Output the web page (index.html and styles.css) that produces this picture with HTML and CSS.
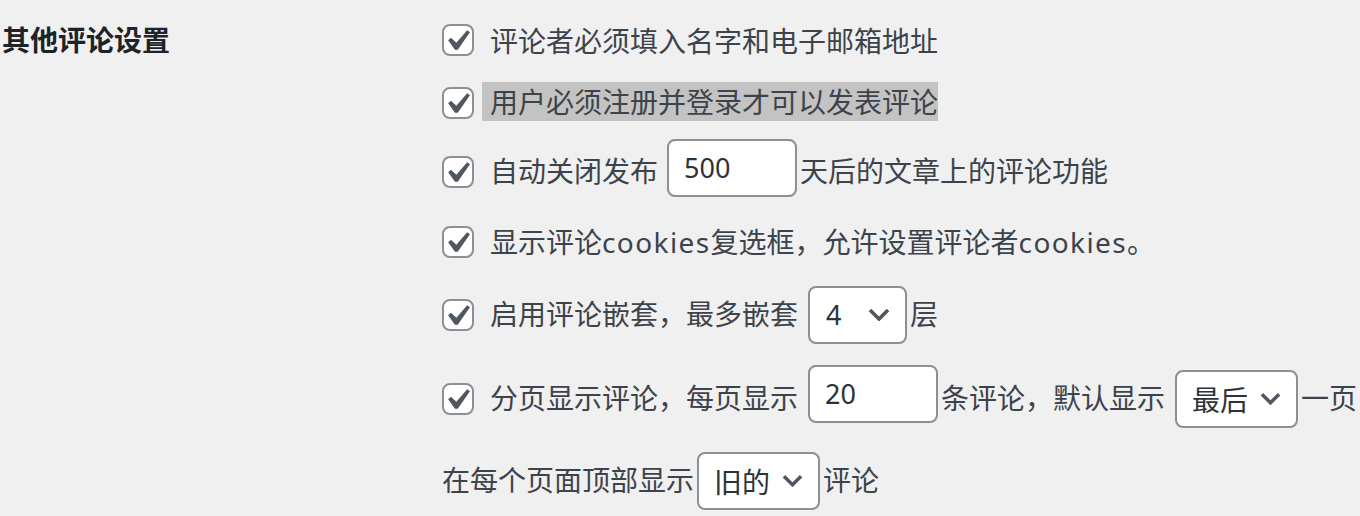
FILE: index.html
```html
<!DOCTYPE html>
<html lang="zh-CN">
<head>
<meta charset="utf-8">
<title>其他评论设置</title>
<link rel="stylesheet" href="styles.css">
</head>
<body>
<div class="form-row">
  <div class="th">其他评论设置</div>
  <div class="td">
    <div class="row r1">
      <span class="check"><svg viewBox="0 0 20 20" width="42" height="42"><path d="M14.83 4.89l1.34.94-5.81 8.38H9.02L5.78 9.67l1.34-1.25 2.57 2.4z"/></svg></span>
      <span class="label">评论者必须填入名字和电子邮箱地址</span>
    </div>
    <div class="row r2">
      <span class="check"><svg viewBox="0 0 20 20" width="42" height="42"><path d="M14.83 4.89l1.34.94-5.81 8.38H9.02L5.78 9.67l1.34-1.25 2.57 2.4z"/></svg></span>
      <span class="label hl">用户必须注册并登录才可以发表评论</span>
    </div>
    <div class="row r3 tall">
      <span class="check"><svg viewBox="0 0 20 20" width="42" height="42"><path d="M14.83 4.89l1.34.94-5.81 8.38H9.02L5.78 9.67l1.34-1.25 2.57 2.4z"/></svg></span>
      <span class="label">自动关闭发布</span>
      <span class="field num up4 sp">500</span>
      <span class="text">天后的文章上的评论功能</span>
    </div>
    <div class="row r4">
      <span class="check"><svg viewBox="0 0 20 20" width="42" height="42"><path d="M14.83 4.89l1.34.94-5.81 8.38H9.02L5.78 9.67l1.34-1.25 2.57 2.4z"/></svg></span>
      <span class="label">显示评论<span class="lat">cookies</span>复选框，允许设置评论者<span class="lat">cookies</span>。</span>
    </div>
    <div class="row r5 tall">
      <span class="check"><svg viewBox="0 0 20 20" width="42" height="42"><path d="M14.83 4.89l1.34.94-5.81 8.38H9.02L5.78 9.67l1.34-1.25 2.57 2.4z"/></svg></span>
      <span class="label">启用评论嵌套，最多嵌套</span>
      <span class="select w98 sp2"><span class="val lat">4</span><svg class="chev" viewBox="0 0 22 13" width="22" height="13"><polyline points="2,2 11,11 20,2"/></svg></span>
      <span class="text">层</span>
    </div>
    <div class="row r6 tall">
      <span class="check"><svg viewBox="0 0 20 20" width="42" height="42"><path d="M14.83 4.89l1.34.94-5.81 8.38H9.02L5.78 9.67l1.34-1.25 2.57 2.4z"/></svg></span>
      <span class="label">分页显示评论，每页显示</span>
      <span class="field num up5 sp2">20</span>
      <span class="text">条评论，默认显示</span>
      <span class="select sp2"><span class="val">最后</span><svg class="chev" viewBox="0 0 22 13" width="22" height="13"><polyline points="2,2 11,11 20,2"/></svg></span>
      <span class="text">一页</span>
    </div>
    <div class="row r7 tall">
      <span class="text">在每个页面顶部显示</span>
      <span class="select nsp"><span class="val">旧的</span><svg class="chev" viewBox="0 0 22 13" width="22" height="13"><polyline points="2,2 11,11 20,2"/></svg></span>
      <span class="text">评论</span>
    </div>
  </div>
</div>
</body>
</html>
```
FILE: styles.css
```css
html, body {
  margin: 0;
  padding: 0;
  background: #f0f0f1;
}
body {
  width: 1360px;
  height: 516px;
  overflow: hidden;
  font-family: "Noto Sans CJK SC", "Noto Sans", sans-serif;
  font-size: 28px;
  color: #3c434a;
}
.form-row {
  display: flex;
  align-items: flex-start;
}
.th {
  width: 440px;
  flex: none;
  box-sizing: border-box;
  padding: 18px 0 0 2px;
  line-height: 42px;
  font-weight: bold;
  color: #1d2327;
}
.td {
  display: flex;
  flex-direction: column;
  padding-left: 2px;
}
.row {
  display: flex;
  align-items: center;
  height: 42px;
  white-space: nowrap;
}
.row.tall { height: 58px; }
.r1 { margin-top: 19px; }
.r2 { margin-top: 21px; }
.r3 { margin-top: 18.5px; }
.r4 { margin-top: 20px; }
.r5 { margin-top: 23px; }
.r6 { margin-top: 26px; }
.r7 { margin-top: 24px; }

.check {
  flex: none;
  width: 32px;
  height: 32px;
  box-sizing: border-box;
  border: 2px solid #8c8f94;
  border-radius: 8px;
  background: #fff;
  margin-right: 16px;
}
.check svg {
  display: block;
  margin: -6px 0 0 -8px;
  fill: #50575e;
}
.label, .text {
  line-height: 42px;
}
.row.tall .label, .row.tall .text {
  margin-bottom: 3px;
}
.label.hl {
  margin-left: -8px;
  padding-left: 8px;
  background: #c3c3c3;
  line-height: 39px;
  margin-bottom: 3px;
}
.lat {
  font-family: "Noto Sans", "Noto Sans CJK SC", sans-serif;
  letter-spacing: 1.4px;
}
.field {
  flex: none;
  box-sizing: border-box;
  width: 130px;
  height: 58px;
  border: 2px solid #8c8f94;
  border-radius: 8px;
  background: #fff;
  padding: 0 0 0 15px;
  line-height: 54px;
  color: #2c3338;
  font-family: "Noto Sans", "Noto Sans CJK SC", sans-serif;
  font-size: 27px;
}
.up4 { margin-bottom: 7px; }
.up5 { margin-bottom: 9px; }
.sp { margin-left: 9px; margin-right: 3px; }
.sp2 { margin-left: 10px; margin-right: 3px; }
.nsp { margin-left: 3px; margin-right: 3px; }
.select {
  flex: none;
  box-sizing: border-box;
  width: 123px;
  height: 58px;
  display: flex;
  align-items: center;
  border: 2px solid #8c8f94;
  border-radius: 8px;
  background: #fff;
  padding: 0 15px 0 15px;
  gap: 12px;
  color: #2c3338;
}
.select .val { line-height: 54px; }
.select.w98 {
  width: 99px;
  justify-content: space-between;
  padding-left: 16px;
  padding-right: 15px;
}
.select.w98 .val { letter-spacing: 0; font-size: 27px; }
.chev {
  display: block;
  fill: none;
  stroke: #50575e;
  stroke-width: 3.6;
  stroke-linecap: butt;
  stroke-linejoin: miter;
}
```
